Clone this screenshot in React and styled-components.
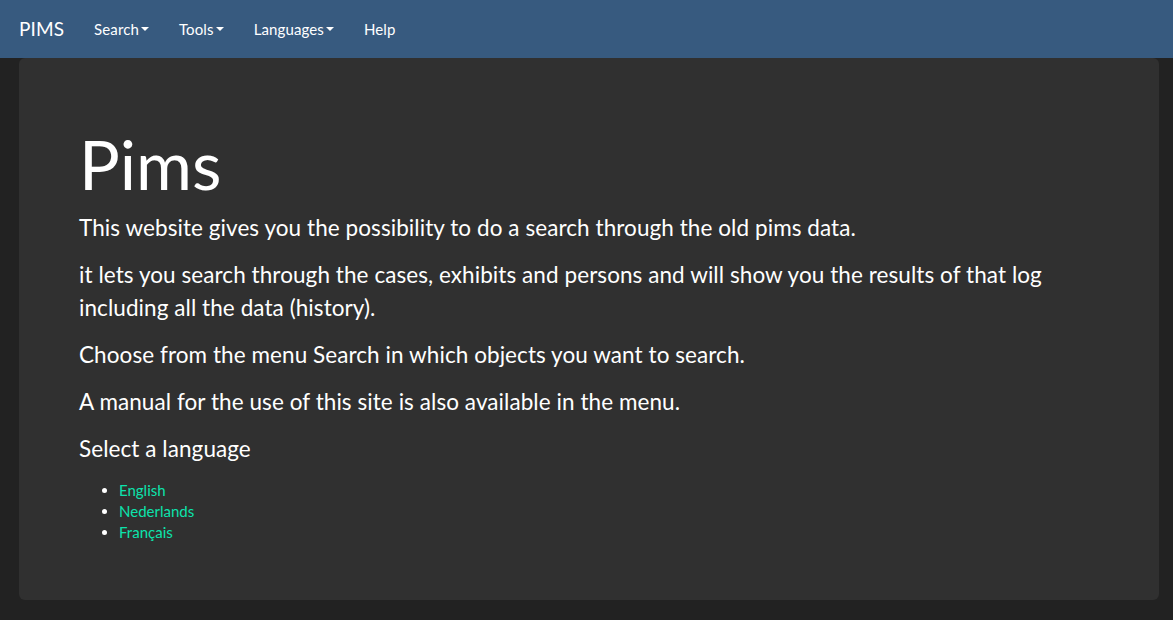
import React from "react";
import styled, { createGlobalStyle } from "styled-components";

const GlobalStyle = createGlobalStyle`
  html, body {
    margin: 0;
    padding: 0;
    background: #222222;
    color: #ffffff;
    font-family: Lato, "Helvetica Neue", Helvetica, Arial, sans-serif;
    font-size: 15px;
    line-height: 1.42857143;
  }
  * {
    box-sizing: border-box;
  }
`;

const Navbar = styled.nav`
  display: flex;
  align-items: center;
  height: 58px;
  background: #375a7f;
  padding: 0 4px;
`;

const Brand = styled.a`
  font-size: 19px;
  color: #ffffff;
  text-decoration: none;
  padding: 0 15px;
  line-height: 58px;
  letter-spacing: 0.1px;
`;

const NavList = styled.ul`
  display: flex;
  list-style: none;
  margin: 0;
  padding: 0;
`;

const NavLink = styled.a`
  display: flex;
  align-items: center;
  padding: 0 15px;
  line-height: 58px;
  color: #ffffff;
  text-decoration: none;
  font-size: 15px;
  letter-spacing: 0.12px;
`;

const Caret = styled.span`
  display: inline-block;
  width: 0;
  height: 0;
  margin-left: 2px;
  border-top: 4px solid #ffffff;
  border-left: 4px solid transparent;
  border-right: 4px solid transparent;
`;

const Page = styled.div`
  padding: 0 14px 0 19px;
`;

const Jumbotron = styled.div`
  background: #303030;
  border-radius: 6px;
  padding: 48px 60px;
`;

const Title = styled.h1`
  font-size: 68px;
  font-weight: 400;
  line-height: 1.1;
  margin: 21px 0 10.5px;
`;

const Lead = styled.p`
  font-size: 22.5px;
  font-weight: 400;
  line-height: 1.42857143;
  letter-spacing: 0.07px;
  margin: 0 0 15px;
`;

const LangList = styled.ul`
  margin: 0 0 9px;
  padding-left: 40px;
  line-height: 21px;
`;

const LangLink = styled.a`
  color: #0ce3ac;
  text-decoration: none;
`;

const navItems = [
  { label: "Search", dropdown: true },
  { label: "Tools", dropdown: true },
  { label: "Languages", dropdown: true },
  { label: "Help" },
];

const languages = ["English", "Nederlands", "Français"];

export default function App() {
  return (
    <>
      <GlobalStyle />
      <Navbar>
        <Brand href="#">PIMS</Brand>
        <NavList>
          {navItems.map((item) => (
            <li key={item.label}>
              <NavLink href="#">
                {item.label}
                {item.dropdown && <Caret />}
              </NavLink>
            </li>
          ))}
        </NavList>
      </Navbar>
      <Page>
        <Jumbotron>
          <Title>Pims</Title>
          <Lead>
            This website gives you the possibility to do a search through the
            old pims data.
          </Lead>
          <Lead>
            it lets you search through the cases, exhibits and persons and will
            show you the results of that log including all the data (history).
          </Lead>
          <Lead>Choose from the menu Search in which objects you want to search.</Lead>
          <Lead>A manual for the use of this site is also available in the menu.</Lead>
          <Lead>Select a language</Lead>
          <LangList>
            {languages.map((lang) => (
              <li key={lang}>
                <LangLink href="#">{lang}</LangLink>
              </li>
            ))}
          </LangList>
        </Jumbotron>
      </Page>
    </>
  );
}
